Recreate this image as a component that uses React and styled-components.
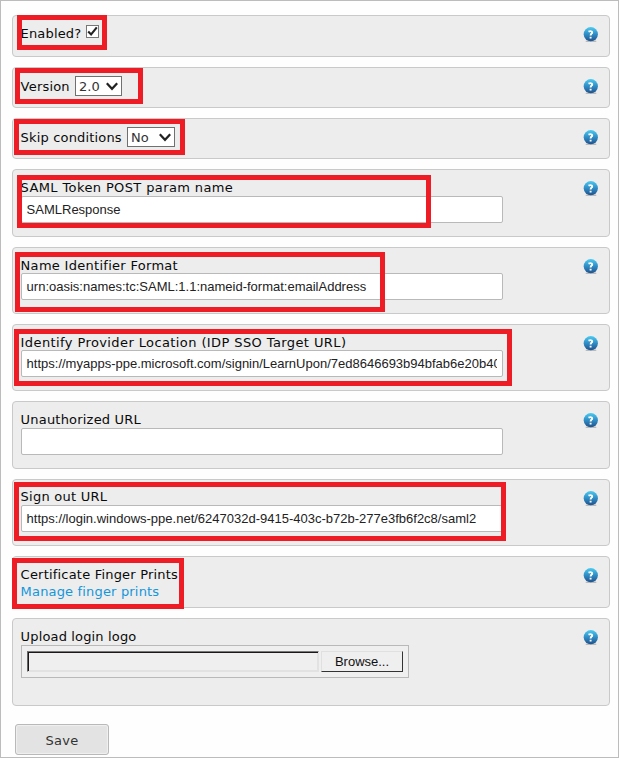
import React from "react";
import styled, { createGlobalStyle } from "styled-components";

const GlobalStyle = createGlobalStyle`
  *, *::before, *::after { box-sizing: border-box; }
  body { margin: 0; background: #fff; }
`;

const Page = styled.form`
  width: 619px;
  height: 758px;
  padding: 14px 8px 0 11px;
  border: 1px solid #bcbcbc;
  background: #fefefe;
  font-family: Verdana, "DejaVu Sans", sans-serif;
  font-size: 13px;
  line-height: 17px;
  color: #0a0a0a;
  overflow: hidden;
`;

const Panels = styled.div`
  display: flex;
  flex-direction: column;
  gap: 10px;
`;

const Panel = styled.section`
  position: relative;
  display: flex;
  justify-content: space-between;
  align-items: flex-start;
  height: ${(p) => p.$height}px;
  padding: 0 11px 0 8px;
  border: 1px solid #c9c9c9;
  border-radius: 4px;
  background: #ededed;
`;

const Content = styled.div`
  padding-top: ${(p) => p.$top ?? 9}px;
`;

const Label = styled.label`
  display: block;
  height: ${(p) => p.$height ?? 17}px;
  margin-left: -0.4px;
  white-space: nowrap;
  letter-spacing: ${(p) => p.$spacing ?? 0}px;
`;

const InlineField = styled.div`
  display: flex;
  align-items: flex-start;
  height: 22px;
`;

const Checkbox = styled.span`
  display: grid;
  place-items: center;
  width: 13px;
  height: 13px;
  margin-left: auto;
  border: 1px solid #777;
  background: #fff;
`;

const EnabledField = styled(InlineField)`
  width: 78px;
`;

const SelectField = styled(InlineField)`
  width: ${(p) => p.$width}px;
  justify-content: space-between;
`;

const Select = styled.button`
  display: flex;
  align-items: center;
  justify-content: space-between;
  flex: none;
  width: ${(p) => p.$width}px;
  height: 20px;
  margin: -2px 0 0;
  padding: 0 3px;
  border: 1px solid #707070;
  background: #fff;
  font: inherit;
  letter-spacing: 0.1px;
  color: #333;
`;

const TextInput = styled.input`
  display: block;
  width: 482px;
  height: 27px;
  margin: 0;
  padding: 0 5px 1px 4.6px;
  border: 1px solid #b9b9b9;
  border-radius: 2px;
  background: #fff;
  font: 13px/17px Arial, "Liberation Sans", sans-serif;
  color: #222;
  outline: none;
`;

const Link = styled.a`
  display: block;
  margin-left: -0.4px;
  letter-spacing: 0.17px;
  color: #1496db;
  text-decoration: none;
`;

const Highlight = styled.div`
  position: absolute;
  left: ${(p) => p.$box[0]}px;
  top: ${(p) => p.$box[1]}px;
  width: ${(p) => p.$box[2]}px;
  height: ${(p) => p.$box[3]}px;
  border: 5px solid #ee1c24;
  pointer-events: none;
`;

const FilePicker = styled.div`
  display: flex;
  gap: 2px;
  width: 388px;
  height: 33px;
  padding: 5px;
  border: 1px solid #b9b9b9;
  background: #efefef;
`;

const FileName = styled.div`
  width: 292px;
  height: 21px;
  border-style: solid;
  border-width: 1px;
  border-color: #777 #e2e2e2 #e2e2e2 #666;
  box-shadow: inset 1px 1px 0 #1c181a, inset -1px -1px 0 #e2e2e2;
  background: #f0eff0;
`;

const BrowseButton = styled.button`
  width: 82px;
  height: 21px;
  padding: 0;
  border: 1px solid;
  border-color: #e0e0e0 #333 #333 #e0e0e0;
  background: #efefef;
  font: 13px/17px Arial, "Liberation Sans", sans-serif;
  color: #111;
`;

const SaveButton = styled.button`
  display: block;
  width: 94px;
  height: 31px;
  margin: 18px 0 0 3px;
  padding: 2px 0 0;
  border: 1px solid #b9b9b9;
  border-radius: 3px;
  background: #e3e3e3;
  box-shadow: inset 0 0 1px 1px #f0f0f0;
  font: inherit;
  letter-spacing: 0.3px;
  color: #333;
`;

const HelpSvg = styled.svg`
  display: block;
  flex: none;
  margin-top: 11px;
`;

const HelpIcon = () => (
  <HelpSvg width="15" height="16" viewBox="0 0 15 16">
    <defs>
      <linearGradient id="help-fill" x1="0" y1="0" x2="0" y2="1">
        <stop offset="0" stopColor="#4ccbf0" />
        <stop offset="0.5" stopColor="#2f8dc6" />
        <stop offset="1" stopColor="#20518c" />
      </linearGradient>
    </defs>
    <ellipse cx="8" cy="14.2" rx="5.5" ry="0.9" fill="#b8b8b8" />
    <circle cx="7.8" cy="7.2" r="7.1" fill="url(#help-fill)" />
    <path
      d="M5.5 4.7 Q7.4 3.7 8.7 4.5 Q9.8 5.6 8.5 6.6 Q7.6 7.2 7.6 8.6 M7.6 9.7 V11.6"
      fill="none"
      stroke="#fff"
      strokeWidth="1.9"
    />
  </HelpSvg>
);

const Chevron = () => (
  <svg width="12" height="9" viewBox="0 0 12 9">
    <path d="M0.8 1.2 L6 6.8 L11.2 1.2" fill="none" stroke="#222" strokeWidth="2.2" />
  </svg>
);

const CheckMark = () => (
  <svg width="11" height="11" viewBox="0 0 11 11">
    <path d="M1.2 5.4 L4.1 8.4 L9.8 1.4" fill="none" stroke="#222" strokeWidth="2.1" />
  </svg>
);

const Section = ({ height, top, box, children }) => (
  <Panel $height={height}>
    <Content $top={top}>{children}</Content>
    <HelpIcon />
    {box && <Highlight $box={box} />}
  </Panel>
);

const textFields = [
  { label: "SAML Token POST param name", value: "SAMLResponse", height: 68, labelHeight: 17, spacing: 0.38, box: [4, 5, 414, 53] },
  { label: "Name Identifier Format", value: "urn:oasis:names:tc:SAML:1.1:nameid-format:emailAddress", height: 67, labelHeight: 16, spacing: 0.29, box: [2, 4, 370, 60] },
  { label: "Identify Provider Location (IDP SSO Target URL)", value: "https://myapps-ppe.microsoft.com/signin/LearnUpon/7ed8646693b94bfab6e20b40", height: 67, labelHeight: 16, spacing: 0.4, box: [1, 4, 498, 57] },
  { label: "Unauthorized URL", value: "", height: 68, labelHeight: 17, spacing: 0.2 },
  { label: "Sign out URL", value: "https://login.windows-ppe.net/6247032d-9415-403c-b72b-277e3fb6f2c8/saml2", height: 67, top: 8, labelHeight: 17, spacing: 0.25, box: [1, 2, 492, 59] },
];

export default function App() {
  return (
    <>
      <GlobalStyle />
      <Page>
        <Panels>
          <Section height={42} box={[4, -1, 90, 35]}>
            <EnabledField>
              <Label $spacing={0.15}>Enabled?</Label>
              <Checkbox>
                <CheckMark />
              </Checkbox>
            </EnabledField>
          </Section>
          <Section height={41} top={10} box={[2, 0, 128, 36]}>
            <SelectField $width={101}>
              <Label $spacing={0.2}>Version</Label>
              <Select type="button" $width={47}>
                2.0
                <Chevron />
              </Select>
            </SelectField>
          </Section>
          <Section height={41} top={10} box={[1, 0, 171, 36]}>
            <SelectField $width={154}>
              <Label $spacing={0.17}>Skip conditions</Label>
              <Select type="button" $width={48}>
                No
                <Chevron />
              </Select>
            </SelectField>
          </Section>
          {textFields.map((f) => (
            <Section key={f.label} height={f.height} top={f.top} box={f.box}>
              <Label $height={f.labelHeight} $spacing={f.spacing}>{f.label}</Label>
              <TextInput defaultValue={f.value} />
            </Section>
          ))}
          <Section height={52} box={[-1, 1, 172, 51]}>
            <Label $spacing={0.2}>Certificate Finger Prints</Label>
            <Link>Manage finger prints</Link>
          </Section>
          <Section height={88}>
            <Label $spacing={0.15}>Upload login logo</Label>
            <FilePicker>
              <FileName />
              <BrowseButton type="button">Browse...</BrowseButton>
            </FilePicker>
          </Section>
        </Panels>
        <SaveButton type="button">Save</SaveButton>
      </Page>
    </>
  );
}
